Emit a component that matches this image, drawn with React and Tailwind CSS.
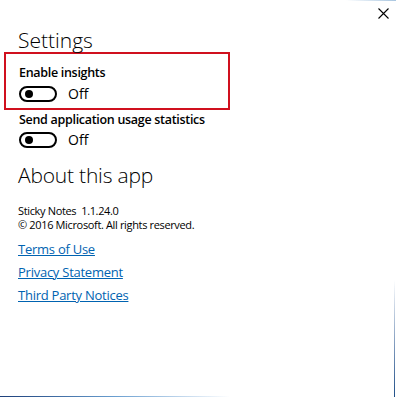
import React from "react";

function Toggle() {
  return (
    <div className="flex items-center">
      <div className="w-[38px] h-[16px] rounded-full border-2 border-black flex items-center pl-[4px]">
        <div className="w-[8px] h-[8px] rounded-full bg-black" />
      </div>
      <span className="ml-[11px] text-[14px] leading-none text-black">Off</span>
    </div>
  );
}

export default function App() {
  return (
    <div
      className="relative w-[396px] h-[397px] bg-white overflow-hidden text-black"
      style={{ fontFamily: '"Open Sans", "Noto Sans", sans-serif' }}
    >
      <div className="absolute top-0 right-0 w-[50px] h-[1px] bg-gradient-to-r from-white to-[#a9c6e0]" />
      <div className="absolute right-[1px] top-[280px] bottom-0 w-[1px] bg-gradient-to-b from-white to-[#1f4f88]" />
      <div className="absolute left-0 bottom-0 w-[230px] h-[1px] bg-gradient-to-r from-[#1d3f7a] via-[#6a9fd0] to-white" />

      <button className="absolute top-[7px] right-[7px] w-[12px] h-[12px] flex items-center justify-center">
        <svg width="11" height="11" viewBox="0 0 11 11" fill="none" stroke="black" strokeWidth="1.1">
          <path d="M0.5 0.5 L10.5 10.5 M10.5 0.5 L0.5 10.5" />
        </svg>
      </button>

      <div className="pt-[27px]">
        <h1 className="pl-[18px] text-[21px] leading-[26px] font-light">Settings</h1>

        <div className="ml-[4px] mt-[-1px] w-[226px] h-[58px] border-2 border-[#d0101e] pl-[13px] pt-[10px]">
          <div className="text-[12.5px] leading-[18px] font-semibold tracking-[-0.3px]">Enable insights</div>
          <div className="mt-[4px]">
            <Toggle />
          </div>
        </div>

        <div className="pl-[19px] pt-[1px]">
          <div className="text-[12.5px] leading-[18px] font-semibold tracking-[-0.3px]">Send application usage statistics</div>
          <div className="mt-[3px]">
            <Toggle />
          </div>
        </div>

        <h2 className="pl-[18px] mt-[14px] text-[21px] leading-[26px] font-light tracking-[-0.2px]">About this app</h2>

        <div className="pl-[18px] mt-[16px] text-[11px] leading-[13.5px] tracking-[-0.35px]">
          <div>Sticky Notes&nbsp;&nbsp;1.1.24.0</div>
          <div>© 2016 Microsoft. All rights reserved.</div>
        </div>

        <div className="pl-[18px] mt-[9px] flex flex-col gap-[5px] text-[13px] leading-[18px] tracking-[-0.25px] text-[#0063b1]">
          <a className="underline w-fit">Terms of Use</a>
          <a className="underline w-fit">Privacy Statement</a>
          <a className="underline w-fit">Third Party Notices</a>
        </div>
      </div>
    </div>
  );
}
